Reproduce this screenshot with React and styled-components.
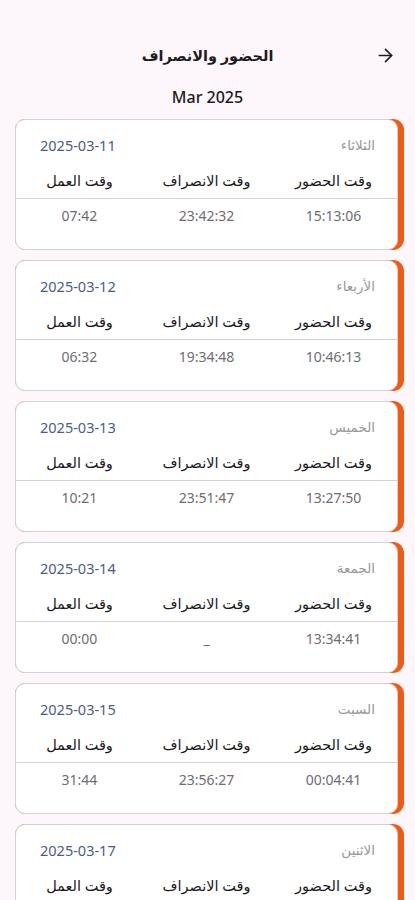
import React from "react";
import styled, { createGlobalStyle } from "styled-components";
import { ArrowRight } from "lucide-react";

const GlobalStyle = createGlobalStyle`
  html, body {
    margin: 0;
    padding: 0;
    background: #fdf7fb;
  }
  body {
    font-family: "Noto Sans", "DejaVu Sans", sans-serif;
  }
`;

const Page = styled.div`
  direction: rtl;
  min-height: 900px;
  background: #fdf7fb;
  padding-top: 35px;
`;

const Header = styled.header`
  display: grid;
  grid-template-columns: 60px 1fr 60px;
  align-items: center;
  height: 40px;
`;

const BackButton = styled.button`
  border: none;
  background: transparent;
  padding: 0;
  margin-right: 19px;
  display: flex;
  align-items: center;
  color: #1c1c1c;
  cursor: pointer;
  justify-self: start;
`;

const Title = styled.h1`
  margin: 0;
  text-align: center;
  font-size: 14.5px;
  font-weight: 600;
  color: #1d1b20;
  line-height: 22px;
`;

const Month = styled.div`
  margin-top: 11px;
  text-align: center;
  font-size: 16px;
  font-weight: 500;
  color: #1d1b20;
  line-height: 22px;
  direction: ltr;
`;

const List = styled.div`
  margin-top: 11px;
  display: flex;
  flex-direction: column;
  gap: 10px;
  padding: 0 11px 0 15px;
`;

const CardShell = styled.div`
  background: #f25a13;
  border-radius: 11px;
  padding-right: 6px;
`;

const Card = styled.div`
  background: #fff;
  border: 1px solid #d3d1d5;
  border-radius: 10px;
  height: 131px;
  box-sizing: border-box;
  direction: rtl;
`;

const TopRow = styled.div`
  display: flex;
  justify-content: space-between;
  align-items: center;
  padding: 16px 22px 0 24px;
  height: 18px;
`;

const DayName = styled.span`
  font-size: 13.5px;
  color: #9a979c;
  line-height: 18px;
`;

const DateText = styled.span`
  font-size: 14.5px;
  color: #4d5a8c;
  line-height: 18px;
  direction: ltr;
`;

const Grid = styled.div`
  display: grid;
  grid-template-columns: repeat(3, 1fr);
  align-items: center;
  padding: ${(p) => p.$pad};
  border-top: ${(p) => (p.$divider ? "1px solid #d3d1d5" : "none")};
`;

const Label = styled.span`
  text-align: center;
  font-size: 14.5px;
  font-weight: 400;
  color: #1a181d;
  line-height: 20px;
`;

const Value = styled.span`
  text-align: center;
  font-size: 14px;
  color: #6f6c72;
  line-height: 20px;
  direction: ltr;
`;

const records = [
  { day: "الثلاثاء", date: "2025-03-11", inT: "15:13:06", outT: "23:42:32", work: "07:42" },
  { day: "الأربعاء", date: "2025-03-12", inT: "10:46:13", outT: "19:34:48", work: "06:32" },
  { day: "الخميس", date: "2025-03-13", inT: "13:27:50", outT: "23:51:47", work: "10:21" },
  { day: "الجمعة", date: "2025-03-14", inT: "13:34:41", outT: "_", work: "00:00" },
  { day: "السبت", date: "2025-03-15", inT: "00:04:41", outT: "23:56:27", work: "31:44" },
  { day: "الاثنين", date: "2025-03-17", inT: "09:12:30", outT: "17:40:05", work: "08:27" },
];

function RecordCard({ r }) {
  return (
    <CardShell>
      <Card>
        <TopRow>
          <DayName>{r.day}</DayName>
          <DateText>{r.date}</DateText>
        </TopRow>
        <Grid $pad="16px 0 8px">
          <Label>وقت الحضور</Label>
          <Label>وقت الانصراف</Label>
          <Label>وقت العمل</Label>
        </Grid>
        <Grid $pad="7px 0 0" $divider>
          <Value>{r.inT}</Value>
          <Value>{r.outT}</Value>
          <Value>{r.work}</Value>
        </Grid>
      </Card>
    </CardShell>
  );
}

export default function App() {
  return (
    <>
      <GlobalStyle />
      <Page>
        <Header>
          <BackButton aria-label="back">
            <ArrowRight size={21} strokeWidth={1.9} />
          </BackButton>
          <Title>الحضور والانصراف</Title>
          <span />
        </Header>
        <Month>Mar 2025</Month>
        <List>
          {records.map((r) => (
            <RecordCard key={r.date} r={r} />
          ))}
        </List>
      </Page>
    </>
  );
}
